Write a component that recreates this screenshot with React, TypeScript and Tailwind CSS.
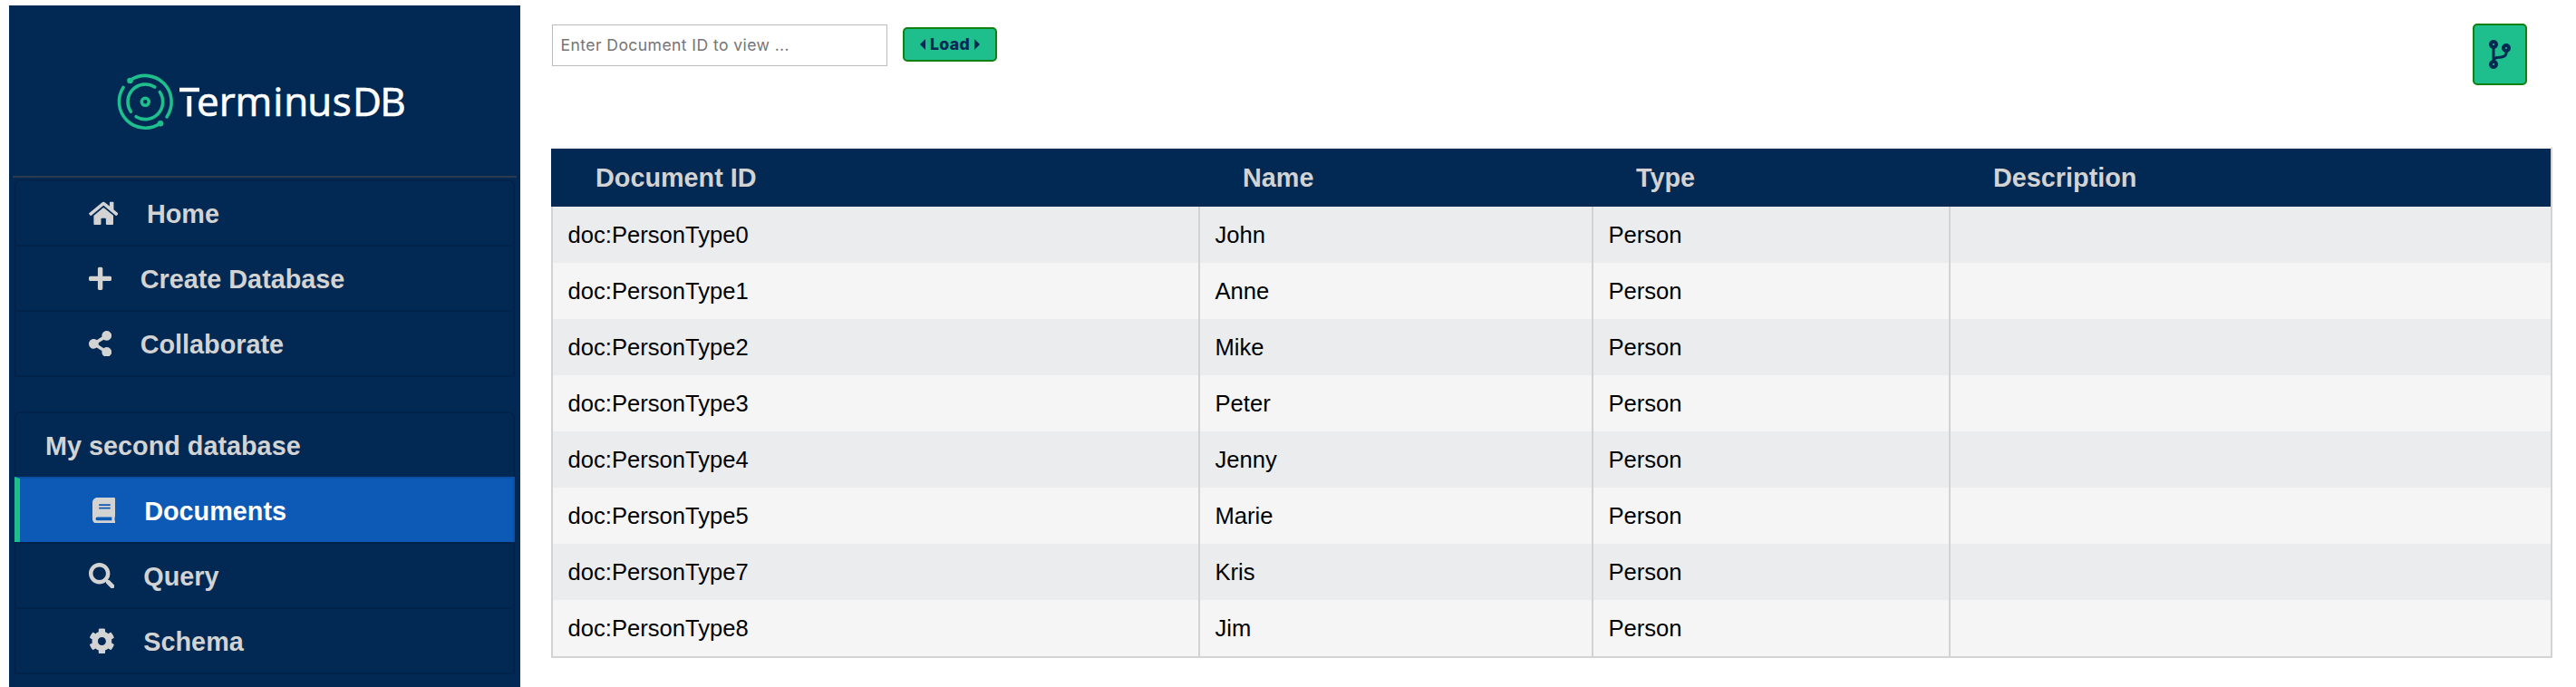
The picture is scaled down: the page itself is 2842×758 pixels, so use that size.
import React from "react";
import { FaHome, FaPlus, FaShareAlt, FaBook, FaSearch, FaCog, FaCodeBranch } from "react-icons/fa";

const rows = [
  ["doc:PersonType0", "John", "Person", ""],
  ["doc:PersonType1", "Anne", "Person", ""],
  ["doc:PersonType2", "Mike", "Person", ""],
  ["doc:PersonType3", "Peter", "Person", ""],
  ["doc:PersonType4", "Jenny", "Person", ""],
  ["doc:PersonType5", "Marie", "Person", ""],
  ["doc:PersonType7", "Kris", "Person", ""],
  ["doc:PersonType8", "Jim", "Person", ""],
];

function Logo() {
  return (
    <svg width="332" height="72" viewBox="124 76 332 72" fill="none">
      <g stroke="#1fbf8d" strokeWidth="3.6" strokeLinecap="round">
        <path d="M144.1 88.3A29 29 0 0 1 184.05 128.9" />
        <path d="M136 96.5A29 29 0 0 0 176.5 136.3" />
        <path d="M170.8 96.1A19.3 19.3 0 0 0 144.4 123.2" />
        <path d="M176.3 101.5A19.3 19.3 0 0 1 150.1 128.7" />
        <circle cx="160.3" cy="112.3" r="4" />
      </g>
      <circle cx="143.5" cy="89" r="3.3" fill="#1fbf8d" />
      <circle cx="177" cy="136.3" r="3.3" fill="#1fbf8d" />
      <path d="M198 96.7H220V101.3H198ZM206.4 106H211.2V128.4H206.4Z" fill="#fff" />
      <g fill="#fff" stroke="#fff" strokeWidth="0.7" fontFamily="'Open Sans', sans-serif" fontWeight="400" fontSize="44">
        <text x="217 241.7 259.5 301.2 313.2 339.3 366.8" y="128.2">erminus</text>
        <text x="389 419.3" y="128.2">DB</text>
      </g>
    </svg>
  );
}

type ItemProps = { icon: React.ReactNode; label: string };

function Item({ icon, label }: ItemProps) {
  return (
    <li className="flex h-[72px] items-center border-b-2 border-[#022349] pl-[79.5px] text-[#d3d3d3]">
      {icon}
      <span className="pt-[2px]">{label}</span>
    </li>
  );
}

export default function App() {
  return (
    <div className="flex h-[758px] w-[2842px] overflow-hidden bg-white pl-[10px] font-['Liberation_Sans',Arial,sans-serif]">
      <aside className="mt-[6px] h-[752px] w-[564px] shrink-0 bg-[#022954] text-[28.8px] leading-[34px] font-bold">
        <div className="mx-1 flex h-[190px] border-b-2 border-[#2c3a4c] pt-[70px] pl-[110px]">
          <Logo />
        </div>
        <ul className="mx-[6px] mt-[2px] rounded-t-md border-2 border-b-0 border-[#022349]">
          <Item icon={<FaHome className="mr-8 h-[28.8px] w-[32.4px]" />} label="Home" />
          <Item icon={<FaPlus className="mr-8 h-[28.8px] w-[25.2px]" />} label="Create Database" />
          <Item icon={<FaShareAlt className="mr-8 h-[28.8px] w-[25.2px]" />} label="Collaborate" />
        </ul>
        <ul className="mx-[6px] mt-[38px] rounded-t-md border-2 border-b-0 border-[#022349]">
          <li className="flex h-[70px] items-center pt-[2px] pl-[32px] text-[#d3d3d3]">My second database</li>
          <li className="-mx-[2px] flex h-[72px] items-center border-t-2 border-r-2 border-l-[6px] border-[#0a50a4] border-l-[#1fbf8d] bg-[#0c59b6] pl-[80px] text-white">
            <FaBook className="mr-8 h-[28.8px] w-[25.2px] text-[#d3d3d3]" />
            <span className="pt-px">Documents</span>
          </li>
          <li className="h-[2px] bg-[#022349]" />
          <Item icon={<FaSearch className="mr-8 size-[28.8px]" />} label="Query" />
          <Item icon={<FaCog className="mr-8 size-[28.8px]" />} label="Schema" />
        </ul>
      </aside>
      <main className="ml-[34px] w-[2208px] shrink-0">
        <div className="flex h-[162px] items-start pt-[26px]">
          <input
            className="mt-px ml-px h-[46px] w-[370px] border border-[#bdbdbd] bg-white pb-[2px] pl-[8.5px] font-['Inter',sans-serif] text-[17.6px] tracking-[0.4px] placeholder:text-[#757575]"
            placeholder="Enter Document ID to view ..."
          />
          <button className="mt-1 ml-[17px] flex h-[38px] w-[104px] items-center justify-center gap-[5px] rounded-[5px] border-2 border-[#108010] bg-[#1fbf8d] font-['Inter',sans-serif] text-[17.6px] font-extrabold tracking-[0.4px] text-[#022954]">
            <svg width="6" height="12" viewBox="0 0 6 12" fill="currentColor"><path d="M6 0V12L0 6Z" /></svg>
            <span>Load</span>
            <svg width="6" height="12" viewBox="0 0 6 12" fill="currentColor"><path d="M0 0V12L6 6Z" /></svg>
          </button>
          <button className="mr-7 ml-auto flex h-[68px] w-[60px] items-center justify-center rounded-[5px] border-2 border-[#108010] bg-[#1fbf8d] text-[#022954]">
            <FaCodeBranch className="h-8 w-6" />
          </button>
        </div>
        <table className="w-[2208px] table-fixed border-separate border-spacing-0 border-t-2 border-r-2 border-b-2 border-[#d3d3d3] border-t-[#f4f4f4] text-left">
          <colgroup>
            <col className="w-[714px]" />
            <col className="w-[434px]" />
            <col className="w-[394px]" />
            <col className="w-[664px]" />
          </colgroup>
          <thead>
            <tr className="h-16 bg-[#022954] text-[28.8px] leading-[34px] text-[#d3d3d3]">
              {["Document ID", "Name", "Type", "Description"].map((h) => (
                <th key={h} className="p-0 pl-[49px] font-bold">{h}</th>
              ))}
            </tr>
          </thead>
          <tbody>
            {rows.map((r) => (
              <tr key={r[0]} className="h-[62px] bg-[#f5f5f5] text-[25.6px] leading-[30px] text-black odd:bg-[#ebecee]">
                {r.map((c, i) => (
                  <td key={i} className="border-l-2 border-[#d3d3d3] p-0 pl-[16.5px]">{c}</td>
                ))}
              </tr>
            ))}
          </tbody>
        </table>
      </main>
    </div>
  );
}
